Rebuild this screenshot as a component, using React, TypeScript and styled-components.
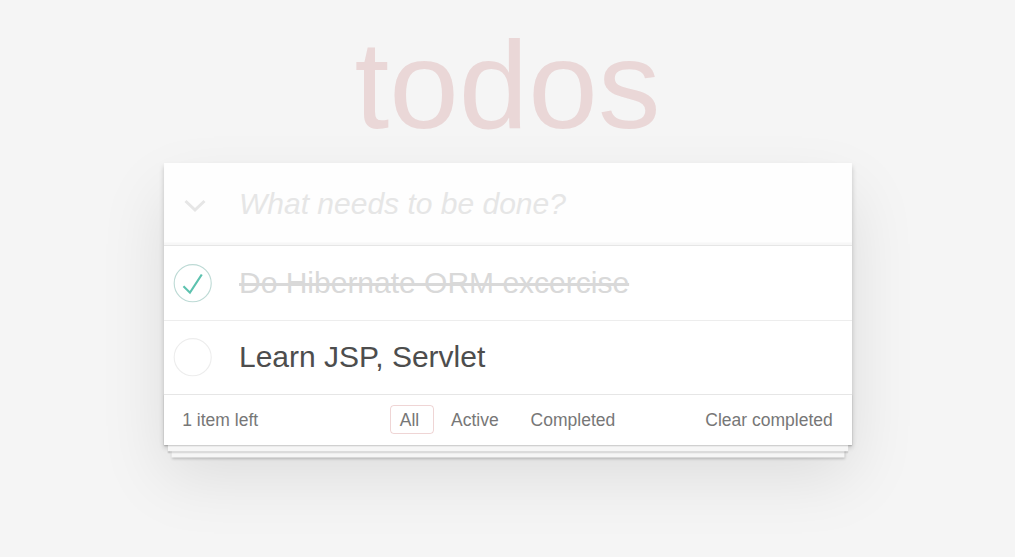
import React from "react";
import styled, { createGlobalStyle } from "styled-components";

const GlobalStyle = createGlobalStyle`
  html, body {
    margin: 0;
    padding: 0;
    min-height: 100%;
  }
  body {
    min-height: 100vh;
    background: #f5f5f5;
    color: #4d4d4d;
    font-family: "Liberation Sans", Arial, Helvetica, sans-serif;
    font-size: 17.5px;
    line-height: 24.5px;
  }
  * { box-sizing: border-box; }
`;

const Page = styled.div`
  max-width: 688px;
  margin: 0 auto;
  padding-bottom: 50px;
`;

const Title = styled.h1`
  margin: 22px 0 16px;
  font-size: 125px;
  line-height: 125px;
  font-weight: 400;
  text-align: center;
  color: rgba(175, 47, 47, 0.15);
`;

const Card = styled.section`
  background: #fff;
  box-shadow: 0 2.5px 5px 0 rgba(0, 0, 0, 0.2),
    0 31.25px 62.5px 0 rgba(0, 0, 0, 0.1);
`;

const Header = styled.header`
  display: flex;
  align-items: center;
  height: 82px;
  background: rgba(0, 0, 0, 0.003);
  box-shadow: inset 0 -2.5px 1.25px rgba(0, 0, 0, 0.03);
`;

const ToggleAll = styled.span`
  flex: none;
  width: 75.5px;
  padding-left: 20px;
  display: flex;
  align-items: center;
  margin-top: 4px;
`;

const NewTodo = styled.input`
  flex: 1;
  min-width: 0;
  border: none;
  outline: none;
  background: transparent;
  padding: 20px 20px 20px 0;
  font-family: inherit;
  font-size: 30px;
  line-height: 42px;
  color: #4d4d4d;
  &::placeholder {
    font-style: italic;
    color: #e6e6e6;
  }
`;

const List = styled.ul`
  margin: 0;
  padding: 0;
  list-style: none;
  border-top: 1px solid #e6e6e6;
`;

const Item = styled.li`
  display: flex;
  align-items: center;
  border-bottom: 1px solid #ededed;
  &:last-child {
    border-bottom: none;
  }
`;

const Toggle = styled.svg`
  flex: none;
  width: 50px;
  height: 50px;
`;

const Label = styled.label<{ $done?: boolean }>`
  flex: 1;
  padding: 18.75px 18.75px 18.75px 25.5px;
  font-size: 30px;
  line-height: 36px;
  word-break: break-all;
  color: ${(p) => (p.$done ? "#d9d9d9" : "#4d4d4d")};
  text-decoration: ${(p) => (p.$done ? "line-through" : "none")};
`;

const Footer = styled.footer`
  display: grid;
  grid-template-columns: 1fr auto 1fr;
  height: 51.25px;
  padding: 12.5px 18.75px;
  border-top: 1px solid #e6e6e6;
  color: #777;
  line-height: 24.5px;
  box-shadow: 0 1.25px 1.25px rgba(0, 0, 0, 0.2),
    0 10px 0 -3.75px #f6f6f6,
    0 11.25px 1.25px -3.75px rgba(0, 0, 0, 0.2),
    0 20px 0 -7.5px #f6f6f6,
    0 21.25px 2.5px -7.5px rgba(0, 0, 0, 0.2);
`;

const Count = styled.span`
  text-align: left;
`;

const Filters = styled.ul`
  margin: 0;
  padding: 0;
  list-style: none;
  white-space: pre;
  text-align: center;
`;

const FilterItem = styled.li`
  display: inline;
`;

const FilterLink = styled.a<{ $selected?: boolean }>`
  margin: 3.75px;
  padding: 3.75px 8.75px;
  color: inherit;
  text-decoration: none;
  border: 1.25px solid
    ${(p) => (p.$selected ? "rgba(175, 47, 47, 0.2)" : "transparent")};
  border-radius: 3.75px;
`;

const Clear = styled.span`
  text-align: right;
  cursor: pointer;
`;

const Circle = ({ done }: { done?: boolean }) => (
  <Toggle viewBox="-10 -18 100 135">
    <circle
      cx="50"
      cy="50"
      r="50"
      fill="none"
      stroke={done ? "#bddad5" : "#ededed"}
      strokeWidth="3"
    />
    {done && <path fill="#5dc2af" d="M72 25L42 71 27 56l-4 4 20 20 34-52z" />}
  </Toggle>
);

const todos = [
  { id: 1, title: "Do Hibernate ORM excercise", done: true },
  { id: 2, title: "Learn JSP, Servlet", done: false },
];

export default function App() {
  return (
    <>
      <GlobalStyle />
      <Page>
        <Title>todos</Title>
        <Card>
          <Header>
            <ToggleAll>
              <svg width="22" height="14" viewBox="0 0 22 14">
                <polyline
                  points="1.5,2 11,11 20.5,2"
                  fill="none"
                  stroke="#e6e6e6"
                  strokeWidth="3"
                />
              </svg>
            </ToggleAll>
            <NewTodo placeholder="What needs to be done?" />
          </Header>
          <List>
            {todos.map((t) => (
              <Item key={t.id}>
                <Circle done={t.done} />
                <Label $done={t.done}>{t.title}</Label>
              </Item>
            ))}
          </List>
          <Footer>
            <Count>1 item left</Count>
            <Filters>
              <FilterItem>
                <FilterLink href="#/" $selected>
                  {"All "}
                </FilterLink>
              </FilterItem>
              <FilterItem>
                <FilterLink href="#/active">Active</FilterLink>
              </FilterItem>
              {" "}
              <FilterItem>
                <FilterLink href="#/completed">Completed</FilterLink>
              </FilterItem>
            </Filters>
            <Clear>Clear completed</Clear>
          </Footer>
        </Card>
      </Page>
    </>
  );
}
